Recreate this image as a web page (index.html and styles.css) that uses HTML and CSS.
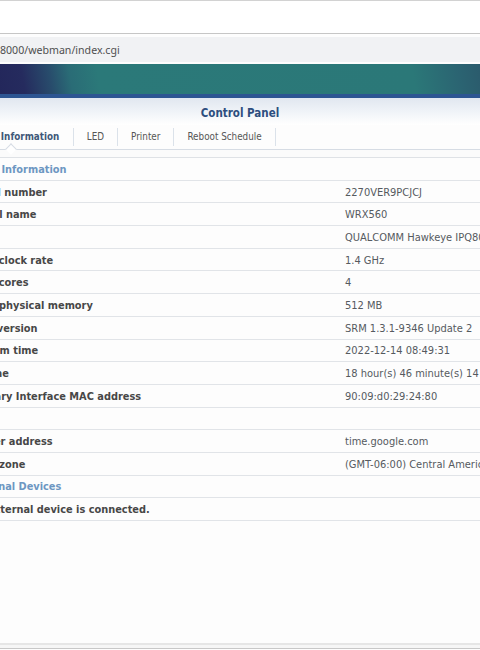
FILE: index.html
```html
<!DOCTYPE html>
<html lang="en">
<head>
<meta charset="utf-8">
<title>Control Panel</title>
<link rel="stylesheet" href="styles.css">
</head>
<body>
<div class="page">
  <div class="chrome-top"></div>
  <div class="addr"><span class="url">8000/webman/index.cgi</span></div>
  <div class="banner"></div>
  <div class="window">
    <div class="cp-head"><span class="cp-title">Control Panel</span></div>
    <div class="tabs">
      <div class="tab active">General Information</div>
      <div class="tab">LED</div>
      <div class="tab">Printer</div>
      <div class="tab">Reboot Schedule</div>
    </div>
    <div class="tab-gap"></div>
    <div class="info">
      <div class="row section"><div class="lbl">Basic Information</div><div class="val"></div></div>
      <div class="row"><div class="lbl">Serial number</div><div class="val">2270VER9PCJCJ</div></div>
      <div class="row"><div class="lbl">Model name</div><div class="val">WRX560</div></div>
      <div class="row"><div class="lbl">CPU</div><div class="val">QUALCOMM Hawkeye IPQ8074</div></div>
      <div class="row"><div class="lbl sub">CPU clock rate</div><div class="val">1.4 GHz</div></div>
      <div class="row"><div class="lbl sub">CPU cores</div><div class="val">4</div></div>
      <div class="row"><div class="lbl">Total physical memory</div><div class="val">512 MB</div></div>
      <div class="row"><div class="lbl">SRM version</div><div class="val">SRM 1.3.1-9346 Update 2</div></div>
      <div class="row"><div class="lbl">System time</div><div class="val">2022-12-14 08:49:31</div></div>
      <div class="row"><div class="lbl">Uptime</div><div class="val">18 hour(s) 46 minute(s) 14 second(s)</div></div>
      <div class="row"><div class="lbl">Primary Interface MAC address</div><div class="val">90:09:d0:29:24:80</div></div>
      <div class="row section"><div class="lbl">Time</div><div class="val"></div></div>
      <div class="row"><div class="lbl">Server address</div><div class="val">time.google.com</div></div>
      <div class="row"><div class="lbl">Time zone</div><div class="val">(GMT-06:00) Central America</div></div>
      <div class="row section"><div class="lbl">External Devices</div><div class="val"></div></div>
      <div class="row"><div class="lbl wide">No external device is connected.</div></div>
    </div>
  </div>
  <div class="spacer"></div>
  <div class="footer"></div>
</div>
</body>
</html>
```
FILE: styles.css
```css
html, body {
  margin: 0;
  padding: 0;
  background: #fdfdfd;
}
body {
  width: 480px;
  height: 650px;
  overflow: hidden;
  font-family: "DejaVu Sans Condensed", "DejaVu Sans", sans-serif;
  font-stretch: condensed;
}
.page {
  display: flex;
  flex-direction: column;
  height: 650px;
  overflow: hidden;
}
.chrome-top {
  height: 32px;
  background: #ffffff;
  border-top: 1px solid #d2d2d2;
  border-bottom: 1px solid #c6c6c6;
  flex: none;
}
.addr {
  flex: none;
  margin-top: 3px;
  height: 25px;
  box-sizing: border-box;
  padding-top: 1px;
  background: #f1f2f4;
  display: flex;
  align-items: center;
  font-family: "Noto Sans", "Open Sans", sans-serif;
  font-stretch: normal;
  font-size: 10.6px;
  color: #4f4f4f;
}
.banner {
  flex: none;
  margin-top: 2px;
  height: 30px;
  background: linear-gradient(80deg, #23275b 0px, #252b5e 25px, #284c6c 52px, #2a6c76 72px, #2b7979 100px, #2b7878 410px, #2b6472 455px, #2b5a6c 480px);
  border-bottom: 4px solid #2d5592;
}
.window {
  flex: none;
  width: 580px;
  margin-left: -50px;
}
.cp-head {
  height: 27px;
  box-sizing: border-box;
  padding-top: 7px;
  background: linear-gradient(180deg, #e1e7f0 0%, #eef2f7 45%, #ffffff 100%);
  text-align: center;
  line-height: 13px;
}
.cp-title {
  font-weight: bold;
  font-size: 11.5px;
  color: #2d4e7f;
}
.tabs {
  height: 24px;
  display: flex;
  align-items: center;
  border-bottom: 1px solid #d6dce4;
  position: relative;
  font-size: 9.8px;
  color: #555555;
}
.tab {
  padding: 0 13px;
  line-height: 18px;
  border-right: 1px solid #dbe2ea;
  white-space: nowrap;
}
.tab:first-child {
  padding-left: 9px;
  padding-right: 13.5px;
}
.tab.active {
  font-weight: bold;
  color: #3f5878;
  position: relative;
}
.tab.active::after {
  content: "";
  position: absolute;
  left: 50%;
  bottom: -7px;
  width: 7px;
  height: 7px;
  margin-left: -4px;
  background: #ffffff;
  border-left: 1px solid #d6dce4;
  border-top: 1px solid #d6dce4;
  transform: rotate(45deg);
}
.tab-gap {
  height: 7px;
  background: #fbfbfb;
}
.info {
  border-top: 1px solid #dfe2e6;
}
.row {
  display: grid;
  grid-template-columns: 395px 1fr;
  height: 22.69px;
  box-sizing: border-box;
  padding-top: 1px;
  border-bottom: 1px solid #e1e4e8;
  align-items: center;
  white-space: nowrap;
  overflow: hidden;
}
.lbl {
  padding-left: 19px;
  font-weight: bold;
  font-size: 10.9px;
  color: #474747;
}
.lbl.sub {
  padding-left: 23px;
}
.lbl.wide {
  grid-column: 1 / 3;
}
.val {
  font-size: 11px;
  color: #555a5f;
}
.section .lbl {
  color: #6d97c2;
}
.spacer {
  flex: 1;
}
.footer {
  flex: none;
  height: 3px;
  border-top: 2px solid #e6e6e6;
  border-bottom: 1px solid #c8c8c8;
  background: #f6f6f6;
  margin-bottom: 1px;
}
```
